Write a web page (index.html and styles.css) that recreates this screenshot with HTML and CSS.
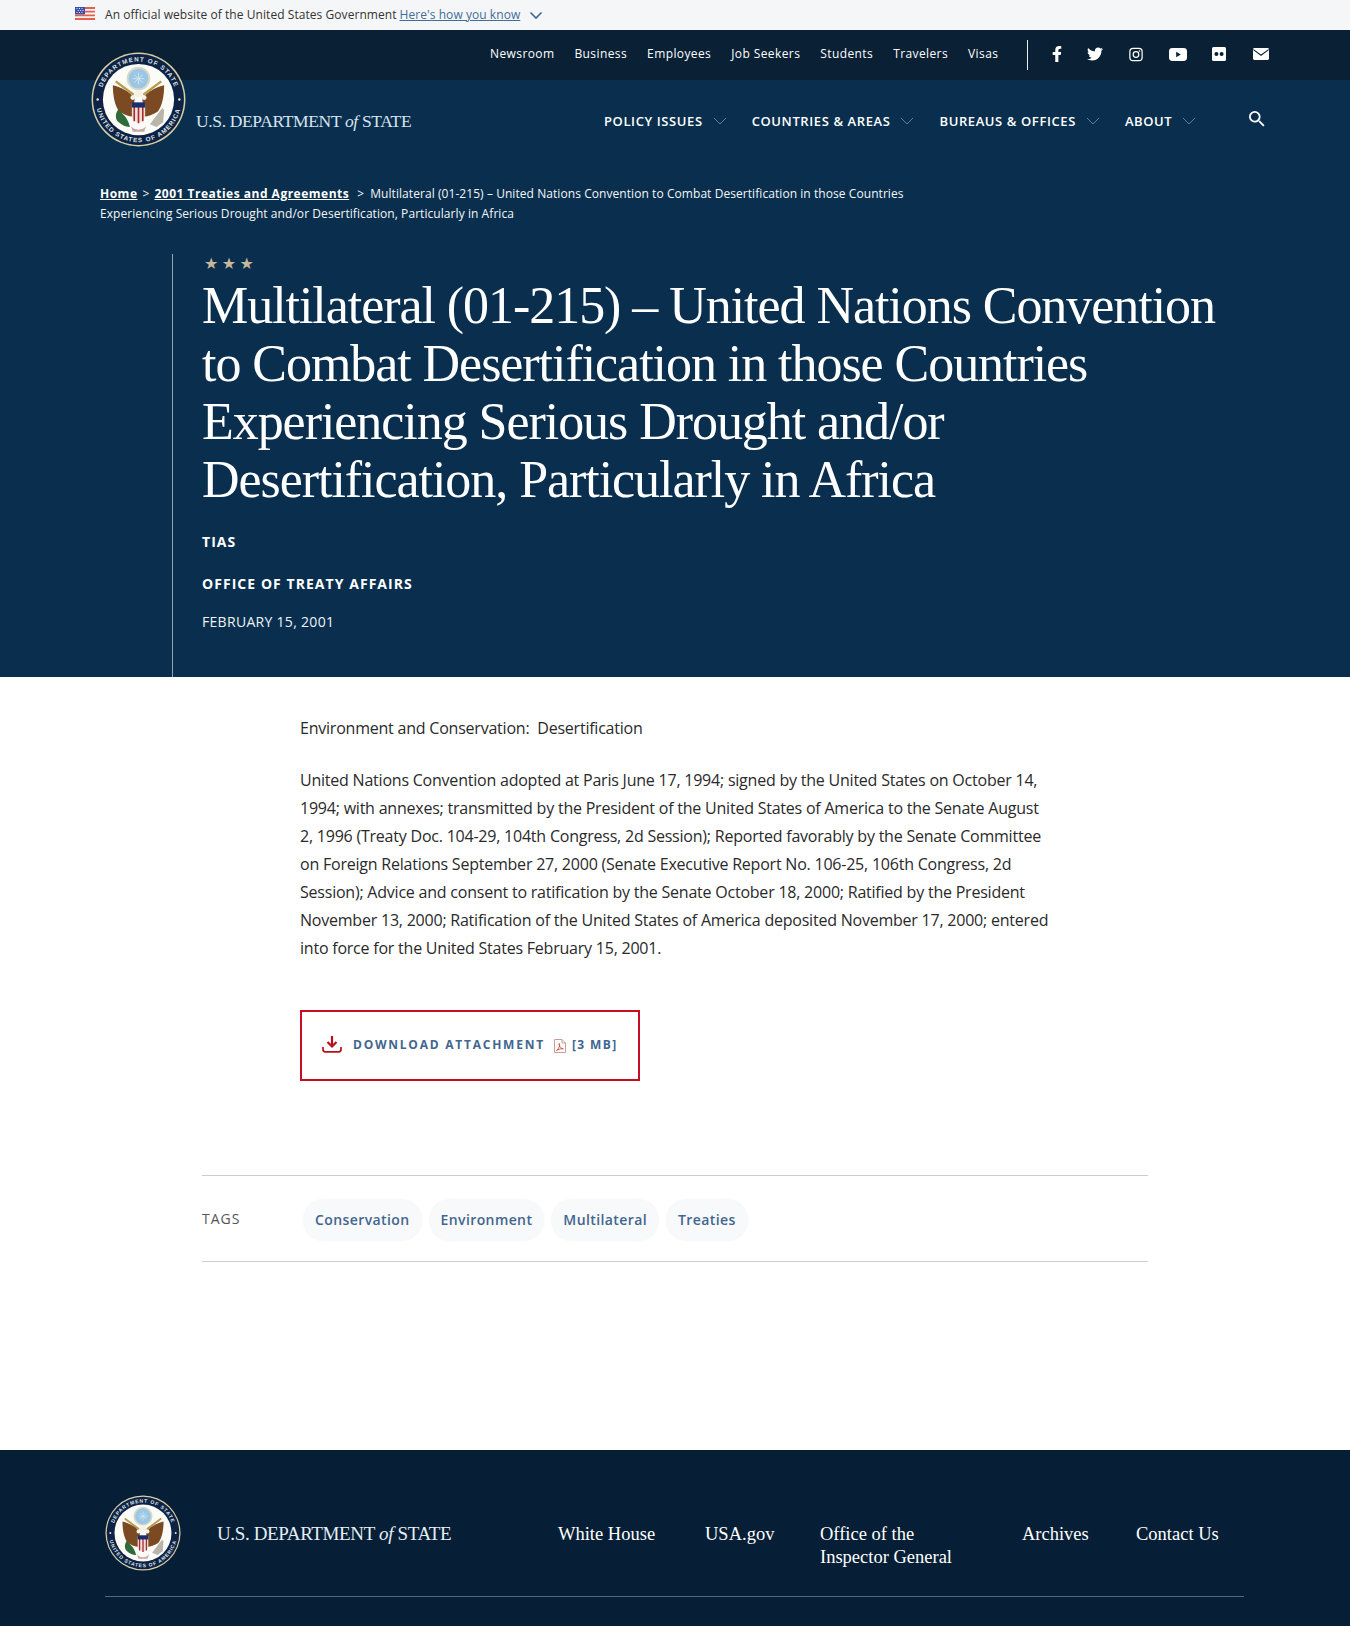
FILE: index.html
```html
<!DOCTYPE html>
<html lang="en">
<head>
<meta charset="utf-8">
<title>Multilateral (01-215) – U.S. Department of State</title>
<link rel="stylesheet" href="styles.css">
</head>
<body>
<svg class="defs" width="0" height="0" aria-hidden="true">
  <defs>
    <symbol id="seal" viewBox="0 0 100 100">
      <circle cx="50" cy="50" r="49.4" fill="#d9cfa6"/>
      <circle cx="50" cy="50" r="47.8" fill="#0d2244"/>
      <path id="arcTop" d="M10 50a40 40 0 0 1 80 0" fill="none"/>
      <path id="arcBot" d="M5 50a45 45 0 0 0 90 0" fill="none"/>
      <text class="seal-text"><textPath href="#arcTop" startOffset="50%" text-anchor="middle">DEPARTMENT OF STATE</textPath></text>
      <text class="seal-text"><textPath href="#arcBot" startOffset="50%" text-anchor="middle">UNITED STATES OF AMERICA</textPath></text>
      <circle cx="7" cy="50" r="1.3" fill="#e9e4cf"/>
      <circle cx="93" cy="50" r="1.3" fill="#e9e4cf"/>
      <circle cx="50" cy="50" r="37.500" fill="#fbfbf7"/>
      <circle cx="50" cy="28" r="11.500" fill="#9cc7e4" stroke="#d9d9c8" stroke-width="2"/>
      <path d="M44 28h12M50 22v12M45.500 24l9 8M54.500 24l-9 8" stroke="#cfe4f2" stroke-width="1"/>
      <path d="M26 31l19 14M74 31L55 45" stroke="#b99b4d" stroke-width="2.400"/>
      <path d="M46 49C40 41 31 37 23 35c0 11 2 22 7 28 5 3 10 5 14 5z" fill="#7c4a22"/>
      <path d="M54 49c6-8 15-12 23-14 0 11-2 22-7 28-5 3-10 5-14 5z" fill="#7c4a22"/>
      <circle cx="50" cy="44" r="4" fill="#f4f1e6"/>
      <circle cx="44" cy="48" r="2.500" fill="#f4f1e6"/>
      <circle cx="56" cy="48" r="2.500" fill="#f4f1e6"/>
      <path d="M43 54h14v12c0 4-3 7-7 9-4-2-7-5-7-9z" fill="#e9e2d9"/>
      <path d="M45.500 58v15M50 58v17M54.500 58v15" stroke="#b3262e" stroke-width="1.700"/>
      <path d="M43 53h14v5.500H43z" fill="#1c2d6b"/>
      <path d="M29 60c-3 4-4 9-1 13 3 3 8 6 13 6-1-5-4-11-8-14z" fill="#2f6b3a"/>
      <path d="M62 76l13-17 2 2-1 13-7 5z" fill="#b9b5aa"/>
      <path d="M42 78c3 5 13 5 16 0l-2 6H44z" fill="#c9a6a8"/>
    </symbol>
  </defs>
</svg>

<div class="gov-banner">
  <svg class="flag" viewBox="0 0 20 13" aria-hidden="true">
    <rect width="20" height="13" fill="#f4f4f4"/>
    <path d="M0 0h20v1.900H0zM0 3.700h20v1.900H0zM0 7.400h20v1.900H0zM0 11.100h20V13H0z" fill="#e4604e"/>
    <rect width="10" height="7.400" fill="#3d4fa8"/>
    <path d="M1.500 1.500h1M4 1.500h1M6.500 1.500h1M2.700 3.500h1M5.200 3.500h1M7.500 3.500h1M1.500 5.500h1M4 5.500h1M6.500 5.500h1" stroke="#fff" stroke-width=".9"/>
  </svg>
  <span class="gov-text">An official website of the United States Government</span>
  <a class="gov-link" href="#">Here's how you know</a>
  <svg class="gov-caret" viewBox="0 0 14 9" aria-hidden="true"><path d="M1.500 1.500L7 7l5.500-5.500" fill="none" stroke="#3a6a94" stroke-width="1.600"/></svg>
</div>

<header class="utility">
  <nav class="utility-links">
    <a href="#">Newsroom</a><a href="#">Business</a><a href="#">Employees</a><a href="#">Job Seekers</a><a href="#">Students</a><a href="#">Travelers</a><a href="#">Visas</a>
  </nav>
  <div class="social">
    <svg class="ic-fb" viewBox="0 0 320 512"><path fill="#fff" d="M279.14 288l14.22-92.66h-88.91v-60.13c0-25.35 12.42-50.06 52.24-50.06h40.42V6.26S260.43 0 225.36 0c-73.22 0-121.08 44.38-121.08 124.72v70.62H22.89V288h81.39v224h100.17V288z"/></svg>
    <svg class="ic-tw" viewBox="0 0 512 512"><path fill="#fff" d="M459.37 151.716c.325 4.548.325 9.097.325 13.645 0 138.72-105.583 298.558-298.558 298.558-59.452 0-114.68-17.219-161.137-47.106 8.447.974 16.568 1.299 25.34 1.299 49.055 0 94.213-16.568 130.274-44.832-46.132-.975-84.792-31.188-98.112-72.772 6.498.974 12.995 1.624 19.818 1.624 9.421 0 18.843-1.3 27.614-3.573-48.081-9.747-84.143-51.98-84.143-102.985v-1.299c13.969 7.797 30.214 12.67 47.431 13.319-28.264-18.843-46.781-51.005-46.781-87.391 0-19.492 5.197-37.36 14.294-52.954 51.655 63.675 129.3 105.258 216.365 109.807-1.624-7.797-2.599-15.918-2.599-24.04 0-57.828 46.782-104.934 104.934-104.934 30.213 0 57.502 12.67 76.67 33.137 23.715-4.548 46.456-13.32 66.599-25.34-7.798 24.366-24.366 44.833-46.132 57.827 21.117-2.273 41.584-8.122 60.426-16.243-14.292 20.791-32.161 39.308-52.628 54.253z"/></svg>
    <svg class="ic-ig" viewBox="0 0 16 16"><rect x="1" y="1" width="14" height="14" rx="3.600" fill="none" stroke="#fff" stroke-width="1.400"/><circle cx="8" cy="8" r="3.200" fill="none" stroke="#fff" stroke-width="1.400"/><circle cx="12" cy="4" r=".9" fill="#fff"/></svg>
    <svg class="ic-yt" viewBox="0 0 18 13"><rect width="18" height="13" rx="3.400" fill="#fff"/><path d="M7.200 3.800l4.600 2.700-4.600 2.700z" fill="#0a2035"/></svg>
    <svg class="ic-fl" viewBox="0 0 14 14"><rect width="14" height="14" rx="1.500" fill="#fff"/><circle cx="4.400" cy="7" r="2" fill="#0a2035"/><circle cx="9.600" cy="7" r="2" fill="#0a2035"/></svg>
    <svg class="ic-ml" viewBox="0 0 16 12"><rect width="16" height="12" rx="1.400" fill="#fff"/><path d="M.4 1.600L8 7.200l7.600-5.600" fill="none" stroke="#0a2035" stroke-width="1.100"/></svg>
  </div>
</header>

<section class="masthead">
  <div class="mainbar">
    <a class="brand" href="#">
      <svg class="brand-seal"><use href="#seal"/></svg>
      <span class="wordmark">U.S. DEPARTMENT <i>of</i> STATE</span>
    </a>
    <nav class="mainnav">
      <a href="#">POLICY ISSUES<svg class="chev" viewBox="0 0 14 8"><path d="M1 1l6 6 6-6" fill="none" stroke="#5f7f9b" stroke-width="1"/></svg></a>
      <a href="#">COUNTRIES &amp; AREAS<svg class="chev" viewBox="0 0 14 8"><path d="M1 1l6 6 6-6" fill="none" stroke="#5f7f9b" stroke-width="1"/></svg></a>
      <a href="#">BUREAUS &amp; OFFICES<svg class="chev" viewBox="0 0 14 8"><path d="M1 1l6 6 6-6" fill="none" stroke="#5f7f9b" stroke-width="1"/></svg></a>
      <a href="#">ABOUT<svg class="chev" viewBox="0 0 14 8"><path d="M1 1l6 6 6-6" fill="none" stroke="#5f7f9b" stroke-width="1"/></svg></a>
    </nav>
    <svg class="search" viewBox="3 3 18 18"><path fill="#fff" d="M15.5 14h-.79l-.28-.27A6.47 6.47 0 0 0 16 9.5 6.5 6.5 0 1 0 9.5 16c1.61 0 3.09-.59 4.23-1.57l.27.28v.79l5 4.99L20.49 19l-4.99-5zm-6 0C7.01 14 5 11.99 5 9.5S7.01 5 9.5 5 14 7.01 14 9.5 11.99 14 9.5 14z"/></svg>
  </div>

  <div class="breadcrumb">
    <a href="#">Home</a><span class="sep">&gt;</span><a href="#">2001 Treaties and Agreements</a><span class="sep sep-last">&gt;</span><span>Multilateral (01-215) – United Nations Convention to Combat Desertification in those Countries</span> <span>Experiencing Serious Drought and/or Desertification, Particularly in Africa</span>
  </div>

  <div class="hero">
    <div class="stars">★★★</div>
    <h1>Multilateral (01-215) – United Nations Convention to Combat Desertification in those Countries Experiencing Serious Drought and/or Desertification, Particularly in Africa</h1>
    <p class="meta meta-tias">TIAS</p>
    <p class="meta meta-office">OFFICE OF TREATY AFFAIRS</p>
    <p class="date">FEBRUARY 15, 2001</p>
  </div>
</section>

<main class="content">
  <p class="lead">Environment and Conservation:&nbsp; Desertification</p>
  <p class="body-text">United Nations Convention adopted at Paris June 17, 1994; signed by the United States on October 14, 1994; with annexes; transmitted by the President of the United States of America to the Senate August 2, 1996 (Treaty Doc. 104-29, 104th Congress, 2d Session); Reported favorably by the Senate Committee on Foreign Relations September 27, 2000 (Senate Executive Report No. 106-25, 106th Congress, 2d Session); Advice and consent to ratification by the Senate October 18, 2000; Ratified by the President November 13, 2000; Ratification of the United States of America deposited November 17, 2000; entered into force for the United States February 15, 2001.</p>
  <a class="download" href="#">
    <svg class="dl-icon" viewBox="0 0 20 18"><path d="M10 1v10M5.500 7l4.500 4.500L14.500 7" fill="none" stroke="#b5121b" stroke-width="2.200"/><path d="M1 12v2.500c0 1.400 1 2.300 2.300 2.300h13.400c1.300 0 2.300-.9 2.300-2.300V12" fill="none" stroke="#b5121b" stroke-width="1.700"/></svg>
    <span class="dl-label">DOWNLOAD ATTACHMENT</span>
    <svg class="pdf-icon" viewBox="0 0 12 14"><path d="M.5.500h7.500l3.500 3.500v9.500H.5z" fill="#fff" stroke="#c9a08f"/><path d="M8 .5V4h3.500" fill="none" stroke="#c9a08f"/><path d="M2.500 11.500C5 9.500 6 6.500 5.700 5c-.3-1-1-.3-.6 1 .5 1.800 2 3.500 4.200 3.800-2-.3-5 .4-6.800 1.700z" fill="none" stroke="#d0392e" stroke-width=".8"/></svg>
    <span class="dl-size">[3 MB]</span>
  </a>
</main>

<section class="tags">
  <span class="tags-label">TAGS</span>
  <div class="tag-list">
    <a href="#">Conservation</a><a href="#">Environment</a><a href="#">Multilateral</a><a href="#">Treaties</a>
  </div>
</section>

<footer class="site-footer">
  <div class="footer-row">
    <a class="footer-brand" href="#">
      <svg class="footer-seal"><use href="#seal"/></svg>
      <span class="footer-word">U.S. DEPARTMENT <i>of</i> STATE</span>
    </a>
    <nav class="footer-links">
      <a href="#">White House</a>
      <a href="#">USA.gov</a>
      <a href="#">Office of the<br>Inspector General</a>
      <a href="#">Archives</a>
      <a href="#">Contact Us</a>
    </nav>
  </div>
  <div class="footer-rule"></div>
</footer>
</body>
</html>
```

FILE: styles.css
```css
* { box-sizing: border-box; }
html, body { margin: 0; padding: 0; }
body {
  width: 1350px;
  height: 1626px;
  overflow: hidden;
  background: #fff;
  font-family: "Open Sans", sans-serif;
  color: #212529;
}
a { color: inherit; }
p, h1 { margin: 0; }
.defs { position: absolute; }

/* gov banner */
.gov-banner {
  height: 30px;
  background: #f5f6f7;
  display: flex;
  align-items: center;
  padding: 0 0 2px 75px;
  font-size: 12px;
  letter-spacing: .06px;
  color: #333;
}
.flag { width: 20px; height: 13px; margin: -1px 10px 0 0; }
.gov-link { margin-left: 3px; color: #3f6e9b; }
.gov-caret { width: 14px; height: 9px; margin: 3px 0 0 9px; }

/* utility */
.utility {
  height: 50px;
  background: #0a2035;
  display: flex;
  align-items: center;
  padding-left: 490px;
  color: #fff;
}
.utility-links { display: flex; font-size: 12px; letter-spacing: .4px; width: 537px; margin-top: -4px; }
.utility-links a { text-decoration: none; margin-right: 20px; }
.social {
  height: 30px;
  border-left: 1px solid #e8edf2;
  display: flex;
  align-items: center;
}
.social svg { display: block; margin-top: -2px; }
.ic-fb { width: 10px; height: 16px; margin-left: 24px; }
.ic-tw { width: 16px; height: 16px; margin-left: 25px; }
.ic-ig { width: 14px; height: 15px; margin-left: 26px; }
.ic-yt { width: 18px; height: 13px; margin-left: 26px; }
.ic-fl { width: 14px; height: 14px; margin-left: 25px; }
.ic-ml { width: 16px; height: 12px; margin-left: 27px; }

/* masthead */
.masthead {
  height: 597px;
  background: #0a2f4e;
  color: #fff;
  position: relative;
}
.mainbar {
  height: 100px;
  display: flex;
  position: relative;
}
.brand {
  position: absolute;
  left: 91px;
  top: -28px;
  display: flex;
  text-decoration: none;
}
.brand-seal { width: 95px; height: 95px; display: block; }
.wordmark {
  font-family: "Liberation Serif", serif;
  font-size: 17.5px;
  letter-spacing: -.35px;
  color: #d8e4ee;
  margin: 59px 0 0 10px;
  white-space: nowrap;
}
.mainnav {
  display: flex;
  padding: 32px 0 0 604px;
  font-size: 13px;
  font-weight: 600;
  letter-spacing: .6px;
}
.mainnav a { text-decoration: none; display: flex; align-items: center; height: 18px; margin-right: 25px; white-space: nowrap; }
.chev { width: 14px; height: 8px; margin-left: 10px; }
.search { position: absolute; left: 1249px; top: 31px; width: 16px; height: 16px; }

.seal-text {
  font-family: "Liberation Sans", sans-serif;
  font-size: 6.6px;
  font-weight: 700;
  letter-spacing: 1.1px;
  fill: #dfe4e8;
}

.breadcrumb {
  margin: 4px 0 0 100px;
  width: 830px;
  font-size: 12px;
  line-height: 20px;
  letter-spacing: .065px;
  color: #f3f6f8;
}
.breadcrumb a { font-weight: 700; letter-spacing: .5px; color: #fff; }
.sep { margin: 0 5px; }
.sep-last { margin-left: 8px; margin-right: 6px; }

.hero {
  position: absolute;
  left: 172px;
  top: 174px;
  bottom: 0;
  width: 1060px;
  border-left: 1px solid #8fa3b5;
  padding-left: 29px;
}
.stars { font-size: 16px; line-height: 20px; letter-spacing: 3.4px; margin-left: 2px; color: #c8b79a; font-family: "DejaVu Sans", sans-serif; }
h1 {
  font-family: "Liberation Serif", serif;
  font-weight: 400;
  font-size: 52px;
  line-height: 58px;
  letter-spacing: -1.05px;
  margin-top: 3px;
}
.meta { font-size: 14px; font-weight: 700; letter-spacing: 1.05px; line-height: 20px; }
.meta-tias { margin-top: 23px; }
.meta-office { margin-top: 22px; }
.date { font-size: 14px; letter-spacing: .3px; line-height: 20px; margin-top: 18px; color: #eef2f6; }

/* content */
.content { padding: 37px 0 0 300px; }
.lead, .body-text { font-size: 16px; line-height: 28px; letter-spacing: -.22px; color: #2a2a2a; }
.body-text { width: 752px; margin-top: 24px; }
.download {
  margin-top: 48px;
  width: 340px;
  height: 71px;
  border: 2px solid #c70d24;
  display: flex;
  align-items: center;
  padding: 0 0 2px 20px;
  text-decoration: none;
  font-size: 12px;
  font-weight: 700;
  letter-spacing: 1.76px;
  color: #41668f;
}
.dl-icon { width: 20px; height: 18px; margin: -1px 11px 0 0; }
.pdf-icon { width: 12px; height: 14px; margin: 2px 6px 0 9px; }
.dl-size { letter-spacing: 1.4px; }

/* tags */
.tags {
  margin: 94px 0 0 202px;
  width: 946px;
  height: 87px;
  border-top: 1px solid #ccc;
  border-bottom: 1px solid #ccc;
  display: flex;
  align-items: center;
}
.tags-label { width: 101px; font-size: 14px; letter-spacing: 1px; color: #555; margin-top: -1px; }
.tag-list { display: flex; gap: 9px; margin: 3px 0 0 1px; }
.tag-list a {
  height: 40px;
  padding: 0 11px;
  border-radius: 20px;
  background: #f8f9fa;
  box-shadow: 0 0 3px rgba(0,0,0,.08);
  font-size: 14px;
  font-weight: 600;
  letter-spacing: .4px;
  line-height: 40px;
  text-decoration: none;
  color: #41668f;
}

/* footer */
.site-footer {
  margin-top: 188px;
  height: 176px;
  background: #061f36;
  padding: 45px 0 0 105px;
  color: #fff;
  font-family: "Liberation Serif", serif;
}
.footer-row { display: flex; height: 101px; }
.footer-brand { display: flex; width: 453px; text-decoration: none; }
.footer-seal { width: 76px; height: 76px; display: block; }
.footer-word { font-size: 19px; letter-spacing: -.36px; margin: 28px 0 0 36px; color: #e4edf4; white-space: nowrap; }
.footer-links {
  display: grid;
  grid-template-columns: 147px 115px 202px 114px auto;
  font-size: 18.5px;
  line-height: 23px;
  padding-top: 28px;
}
.footer-links a { text-decoration: none; white-space: nowrap; }
.footer-rule { width: 1139px; height: 1px; background: #4d6a85; }
```
